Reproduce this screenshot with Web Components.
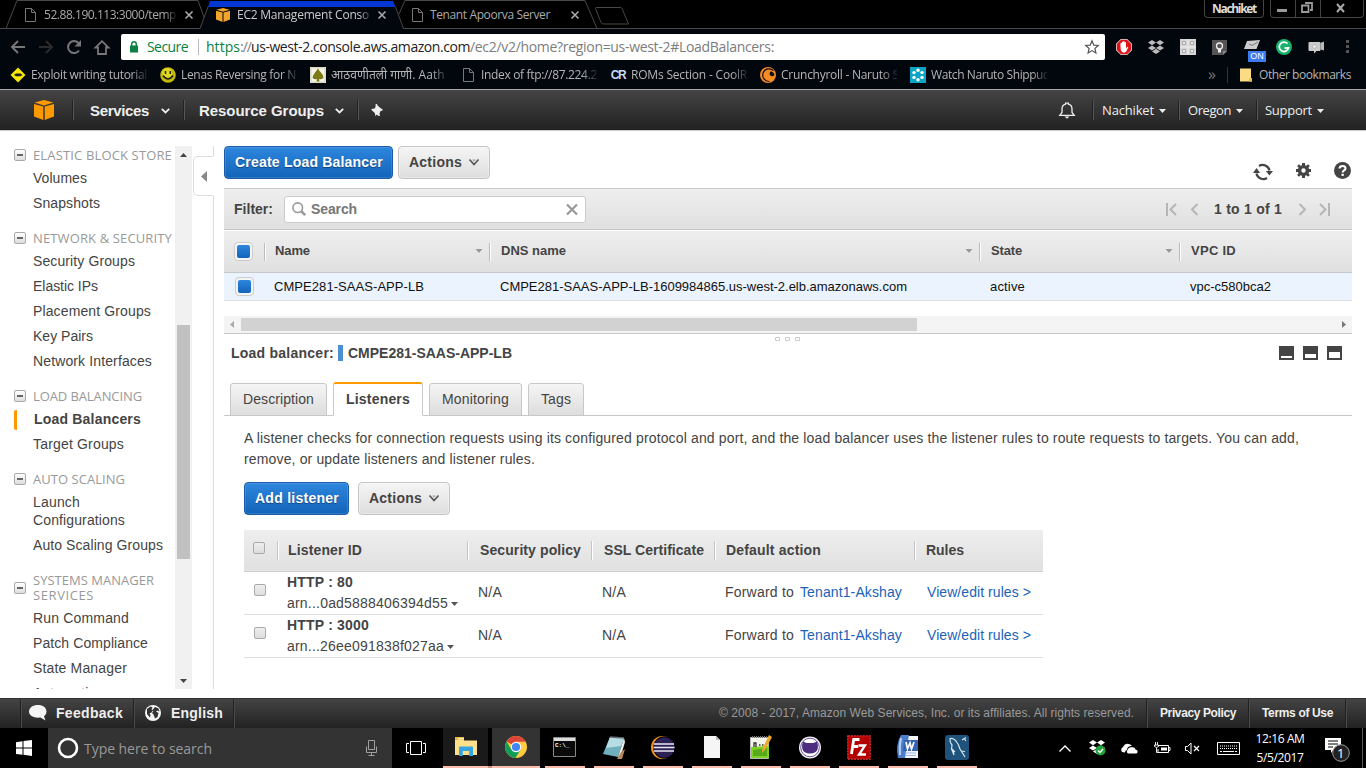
<!DOCTYPE html>
<html lang="en">
<head>
<meta charset="utf-8">
<title>EC2 Management Console</title>
<style>
html,body{margin:0;height:768px;overflow:hidden;background:#fff}
body{font-family:"Liberation Sans",Arial,sans-serif;font-size:14px;color:#444}
</style>
</head>
<body>
<app-desktop></app-desktop>
<script>
const BASE = `*{box-sizing:border-box}svg{display:block;flex:none;overflow:visible}.r{display:flex;align-items:center}.b{font-weight:bold}`;
function define(name, css, html, init) {
  customElements.define(name, class extends HTMLElement {
    constructor() {
      super();
      const t = document.createElement('template');
      t.innerHTML = `<style>${BASE}${css}</style>${html}`;
      this.attachShadow({mode: 'open'}).appendChild(t.content.cloneNode(true));
    }
    connectedCallback() { if (init) init(this); }
  });
}
const rep = (list, fn) => list.map(fn).join('');

/* Text run tracked out or in to an exact width (w attribute). */
define('fit-text', `:host{display:inline-block;white-space:nowrap;flex:none;justify-self:start}`, `<slot></slot>`, el => {
  const w = parseFloat(el.getAttribute('w'));
  if (!w) return;
  const n = [...el.textContent].length;
  el.style.letterSpacing = '0px';
  const range = document.createRange();
  range.selectNodeContents(el);
  const natural = range.getBoundingClientRect().width;
  el.style.letterSpacing = ((w - natural) / n).toFixed(4) + 'px';
});

/* ---------- icons ---------- */
const PAGE = `<path d="M1.5.5h6l4 4v9h-10z M7.5.5v4h4" fill="none" stroke="#777"/>`;
const CUBE = c => `<path d="M10 0l9.5 2.6L10 5.4.5 2.6zM0 4l9.3 2.5V20L0 16.6zM20 4l-9.3 2.5V20L20 16.6z" fill="${c}"/>`;
const DROPBOX = c => `<path d="M4 0l4 2.6L4 5.2 0 2.6zM12 0l4 2.6-4 2.6-4-2.6zM4 5.4L8 8l-4 2.6L0 8zM12 5.4L16 8l-4 2.6L8 8zM8 8.8l4 2.6L8 14l-4-2.6z" fill="${c}"/>`;
const ICONS = {
  page: [13,14,PAGE],
  cube: [20,20,CUBE('#f90')],
  cubetab: [14,14,`<g transform="scale(.7)">${CUBE('#f2a52b')}</g>`],
  x: [8,8,`<path d="M.5.5l7 7M7.5.5l-7 7" stroke="#aaa" stroke-width="1.6"/>`],
  back: [14,14,`<path d="M14 7H1.5M7 1L1 7l6 6" fill="none" stroke="#777" stroke-width="2"/>`],
  fwd: [14,14,`<path d="M0 7h12.500M7 1l6 6-6 6" fill="none" stroke="#2b2b2d" stroke-width="2"/>`],
  reload: [14,14,`<path d="M12 10.500A6 6 0 1 1 11.500 3" fill="none" stroke="#777" stroke-width="2"/><path d="M14 0v6.500H7.500z" fill="#777"/>`],
  home: [16,15,`<path d="M8 1.200L1.500 7.500H4V14h8V7.500h2.500z" fill="none" stroke="#777" stroke-width="1.800"/>`],
  lock: [8,12,`<path d="M0 4.500h8V11.500H0z" fill="#0b8043"/><path d="M1.700 5V3a2.300 2.300 0 0 1 4.600 0v2" fill="none" stroke="#0b8043" stroke-width="1.400"/>`],
  star: [14,14,`<path d="M7 .8l1.800 4.300 4.500.4-3.400 3 1 4.500L7 10.600 3.100 13l1-4.500-3.400-3 4.500-.4z" fill="none" stroke="#555" stroke-width="1.200"/>`],
  adblock: [16,16,`<path d="M4.800 0h6.400L16 4.800v6.400L11.200 16H4.800L0 11.200V4.800z" fill="#e4dcdc"/><path d="M5 .8h6l4.200 4.200v6L11 15.200H5L.8 11V5z" fill="#e2121b"/><path d="M4.500 8V4.300q.7-.8 1.300 0V7V3q.7-.8 1.400 0v3.500V2.500q.7-.8 1.400 0v4V3.500q.7-.8 1.400 0v6l1-1.500q.9-.6 1.200.2L10.300 12.500Q8.500 14.500 6 13Q4.500 11.500 4.500 8z" fill="#fff"/>`],
  dropext: [16,14,DROPBOX('#bbb')],
  grid: [16,16,`<path d="M0 0h16v16H0z" fill="#d5d5d5"/><g fill="#e8e8e8" stroke="#aaa"><path d="M2.500 2.500h3v3h-3zM10.500 2.500h3v3h-3zM2.500 10.500h3v3h-3zM10.500 10.500h3v3h-3z"/></g><path d="M0 8h16M8 0v16" stroke="#eee"/>`],
  keep: [15,15,`<path d="M0 0h15v11l-4 4H0z" fill="#555"/><path d="M15 11h-4v4z" fill="#888"/><circle cx="7.500" cy="6" r="3" fill="none" stroke="#eee" stroke-width="1.300"/><path d="M6 9h3v3.500H6z" fill="#eee"/>`],
  mailon: [22,22,`<path d="M3 1l13-1-3.500 9L0 9z" fill="#ccc"/><path d="M5 4l3 1.500L14 2" fill="none" stroke="#777"/>`],
  grammarly: [16,16,`<circle cx="8" cy="8" r="8" fill="#15b36a"/><path d="M11.500 4.700A4.700 4.700 0 1 0 12.500 9H8.500" fill="none" stroke="#fff" stroke-width="1.800"/>`],
  chat: [17,13,`<path d="M1.500 1h10q1 0 1 1v7q0 1-1 1H8.500L6 12.500V10H1.500q-1 0-1-1V2q0-1 1-1z" fill="#ccc"/><path d="M12.500 2L16 .5v9l-3.500-1z" fill="#bbb"/><path d="M5 4h3v3H5z" fill="#fff" stroke="#aaa" stroke-width=".7"/>`],
  dots: [3,14,`<path d="M0 0h3v3H0zM0 5h3v3H0zM0 10h3v3H0z" fill="#555"/>`],
  exploit: [16,16,`<path d="M8 .5L15.500 8 8 15.500.5 8z" fill="#f6e800"/><path d="M4 8L6 6.500h4.500L12.500 8l-2 1.300H6z" fill="#222"/>`],
  smile: [16,16,`<circle cx="8" cy="8" r="7.800" fill="#c3b90a"/><circle cx="7" cy="6" r="5" fill="#e0d820"/><path d="M5.500 4v3M10.300 4v3M3 8.500q5 7 10 0" fill="none" stroke="#222" stroke-width="1.500"/>`],
  leaf: [16,16,`<path d="M0 0h16v16H0z" fill="#fff"/><path d="M.8.8h14.400v14.400H.8z" fill="#f4f4ec" stroke="#b5b38a" stroke-width=".7"/><path d="M8 1.500q1 2 3 4t2.500 5q-1 2.500-4.500 1.500l.5 2.500h-3l.5-2.500Q3.500 13 2.500 10.500 3 8 5 5.500T8 1.500z" fill="#7d7a16"/>`],
  crunchy: [16,16,`<circle cx="8" cy="8" r="8" fill="#f78b24"/><path d="M13.500 3.700A6.300 6.300 0 1 0 9.500 14.400" fill="none" stroke="#111" stroke-width="1.200"/><circle cx="9.600" cy="9" r="4.900" fill="#f78b24"/><path d="M11 4.300a2.600 2.600 0 1 0 3.500 3.500 5 5 0 0 0-3.500-3.500" fill="#111"/>`],
  naruto: [16,16,`<path d="M0 0h16v16H0z" fill="#0aa5c8"/><g fill="#fff"><circle cx="8" cy="3.300" r="1.700"/><circle cx="12" cy="5.600" r="1.700"/><circle cx="12" cy="10.400" r="1.700"/><circle cx="8" cy="12.700" r="1.700"/><circle cx="4" cy="10.400" r="1.700"/><circle cx="4" cy="5.600" r="1.700"/></g>`],
  folder: [12,14,`<path d="M0 .5h11v9.500l1 .500v3H0z" fill="#fbdc83"/><path d="M9 13.500v-3h3v3z" fill="#e5bc54"/>`],
  caret: [9,6,`<path d="M.8.8l3.700 3.700L8.200.8" fill="none" stroke="#eee" stroke-width="1.800"/>`],
  caretfill: [7,4,`<path d="M0 0h7L3.500 4z" fill="#eee"/>`],
  pin: [12,13,`<path d="M4.800 0L11 5.400 9.700 6.600 8.700 6.300 6.900 8.600 7 11.200 5.900 11.300 3.900 8.700" fill="#eee"/><path d="M4.800 0h1.200L6.500 2l3 2.500L11.500 5v1.500L9.500 7 8.500 9.500 9 12H7.800L5.500 9.800 4.500 12.500 3.800 9 .5 6V5l3-.5L5 3z" fill="#eee"/>`],
  bell: [16,17,`<path d="M.8 13.300L3 10.500V7q0-4 3.600-4.800V1.200h2.800v1Q13 3 13 7v3.500l2.200 2.800z" fill="none" stroke="#eee" stroke-width="1.300"/><path d="M5.500 14.500h5L8 16.800z" fill="#eee"/>`],
  refresh: [20,16,`<path d="M16.500 6.500A7 7 0 0 0 6 2M3.500 9.500A7 7 0 0 0 14 14" fill="none" stroke="#444" stroke-width="2.300"/><path d="M12.800 7h7.200l-3.500 4.500zM0 9l3.500-5L7.200 9z" fill="#444"/>`],
  gear: [15,15,`<path d="M6 0h3v2.200l1.500.5L12 1.200 13.900 3.100 12.500 4.600 13 6h2v3h-2l-.5 1.400 1.400 1.500L12 13.800l-1.500-1.500-1.500.5V15H6v-2.200l-1.500-.5L3 13.800 1.100 11.900 2.500 10.400 2 9H0V6h2l.5-1.400L1.100 3.100 3 1.200l1.500 1.500L6 2.200zM7.500 5.300a2.200 2.200 0 1 0 0 4.400 2.200 2.200 0 0 0 0-4.400" fill="#444" fill-rule="evenodd"/>`],
  help: [17,17,`<circle cx="8.500" cy="8.500" r="8.500" fill="#444"/><path d="M5.500 6.500Q5.700 4 8.600 4T11.500 6.500Q11.500 7.800 9.800 8.600 8.700 9.200 8.700 10.500" fill="none" stroke="#fff" stroke-width="2.100"/><path d="M7.500 11.800h2.300v2.100H7.500z" fill="#fff"/>`],
  search: [14,14,`<circle cx="5.700" cy="5.700" r="4.800" fill="none" stroke="#999" stroke-width="1.600"/><path d="M9.200 9.200l4 4" stroke="#999" stroke-width="2.600"/>`],
  clear: [12,11,`<path d="M1 .5l10 10M11 .5l-10 10" stroke="#999" stroke-width="2.200"/>`],
  first: [11,13,`<path d="M1 0v13M10 1L4.500 6.500 10 12" fill="none" stroke="#b5b5b5" stroke-width="2"/>`],
  prev: [7,13,`<path d="M6.500 1L1 6.500 6.500 12" fill="none" stroke="#b5b5b5" stroke-width="2"/>`],
  next: [7,13,`<path d="M.5 1L6 6.500.5 12" fill="none" stroke="#b5b5b5" stroke-width="2"/>`],
  last: [11,13,`<path d="M10 0v13M1 1l5.500 5.500L1 12" fill="none" stroke="#b5b5b5" stroke-width="2"/>`],
  sort: [8,5,`<path d="M.5 0h7L4 4z" fill="#999"/>`],
  drop: [7,4,`<path d="M0 0h7L3.500 4z" fill="#555"/>`],
  pane1: [15,14,`<path d="M0 0h15v14H0z" fill="#444"/><path d="M2 10h11v2H2z" fill="#fff"/>`],
  pane2: [15,14,`<path d="M0 0h15v14H0z" fill="#444"/><path d="M2 8h11v4H2z" fill="#fff"/>`],
  pane3: [15,14,`<path d="M0 0h15v14H0z" fill="#444"/><path d="M2 6h11v6H2z" fill="#fff"/>`],
  grip: [26,4,`<g fill="none" stroke="#ccc"><path d="M.5 3.500v-3h4v3zM10.500 3.500v-3h4v3zM20.500 3.500v-3h4v3z"/></g>`],
  up: [7,4,`<path d="M3.500 0L7 4H0z" fill="#444"/>`],
  down: [7,4,`<path d="M0 0h7L3.500 4z" fill="#444"/>`],
  left: [6,11,`<path d="M6 0v11L0 5.500z" fill="#888"/>`],
  sleft: [4,7,`<path d="M4 0v7L0 3.500z" fill="#aaa"/>`],
  sright: [4,7,`<path d="M0 0l4 3.500L0 7z" fill="#777"/>`],
  actcaret: [10,7,`<path d="M.5.5L5 5.500 9.500.5" fill="none" stroke="#555" stroke-width="1.600"/><path d="M3 .5L5 2.800 7 .5z" fill="#aaa"/>`],
  bubble: [18,16,`<path d="M9 0c5 0 8.500 2.700 8.500 6.500 0 2-1 3.700-2.500 4.800l1.500 4.200-5-3C5.500 13.300 0 11 0 6.500 0 2.700 4 0 9 0z" fill="#f4f4f4"/>`],
  globe: [16,16,`<circle cx="8" cy="8" r="8" fill="#f4f4f4"/><path d="M2 4l3.500-2.500 2 1-1 2 1.500 1-2 2.500H4.500l1 2-.5 2.500L2 9zM10 2l3.500 1.500 1 3-2-1-1.500 1 2.500 1.500-1 4-2.500 1.500-1.500-4L7 8l1.500-2-1-1z" fill="#333"/>`],
  win: [16,16,`<path d="M0 2.200L6.500 1.300V7.500H0zM7.500 1.100L16 0v7.500H7.500zM0 8.500h6.500v6.300L0 13.900zM7.500 8.500H16V16l-8.500-1.200z" fill="#fff"/>`],
  cortana: [22,22,`<circle cx="11" cy="11" r="9" fill="none" stroke="#fff" stroke-width="2.600"/>`],
  mic: [11,16,`<path d="M2.500.5h6v9h-6zM.5 6.500v6h10v-6M5.500 12.500v3M2.500 15.500h6" fill="none" stroke="#a0a0a0"/>`],
  taskview: [20,14,`<path d="M4.500.5h11v13h-11zM3 2.500H.5v9H3M17 2.500h2.500v9H17" fill="none" stroke="#fff"/>`],
  explorer: [22,20,`<path d="M0 1.500h9V3.500h13V18H0z" fill="#ffe08a"/><path d="M0 0h9v3H0z" fill="#e9b53f"/><path d="M3 1h6v1.500H3z" fill="#fff1b0"/><path d="M4 10.500q0-1 1-1h12q1 0 1 1V19h-3.800v-5H7.800v5H4z" fill="#35a6e0"/>`],
  chrome: [22,22,`<circle cx="11" cy="11" r="11" fill="#ffcd40"/><path d="M11 11L1.500 5.500A11 11 0 0 1 20.600 5.700H11z" fill="#db4437"/><path d="M1.500 5.500A11 11 0 0 0 10.500 22L15.600 13.500 11 11 6.400 13.500z" fill="#0f9d58"/><circle cx="11" cy="11" r="5.200" fill="#fff"/><circle cx="11" cy="11" r="4.100" fill="#4285f4"/>`],
  cmd: [23,20,`<path d="M.5.5h22v19H.5z" fill="#0a0a0a" stroke="#888"/><path d="M1 1h21v3H1z" fill="#ddd"/>`],
  notepad: [23,23,`<path d="M7 1l14 1-6 19L0 18z" fill="#6fb0bf"/><path d="M7 1l14 1-3 8L3 12z" fill="#b5dde3"/><path d="M21 2l1 4-5 17-2-2z" fill="#eee"/><path d="M18 16l4-3-3 10H14z" fill="#b98a57"/><path d="M7 1l14 1" stroke="#667" stroke-width="1.500"/>`],
  eclipse: [24,23,`<circle cx="11.500" cy="11.500" r="11.500" fill="#f7941e"/><circle cx="13.500" cy="11.500" r="11.300" fill="#000"/><circle cx="13.300" cy="11.500" r="10.300" fill="#2c2255"/><path d="M3 8h20M2.500 11.500h21M3 15h20" stroke="#e9e7f3" stroke-width="1.600"/>`],
  doc: [16,22,`<path d="M0 0h12l4 4v18H0z" fill="#f5f5f5"/><path d="M12 0v4h4z" fill="#bbb"/>`],
  npp: [22,24,`<path d="M.5 2.500h18v21H.5z" fill="#f2f6ea" stroke="#bbb"/><path d="M1 12l18-1v12H1z" fill="#7ed321"/><path d="M3 15l14-2v8H3z" fill="#55ab1c"/><path d="M2 2h16" stroke="#777" stroke-dasharray="1 1" stroke-width="2"/><path d="M4 12V8h2v4M9 10h1.500M12 10h1.500" fill="none" stroke="#333" stroke-width="1.300"/><path d="M19 0l3 2-7 13-3 3 .5-4.500z" fill="#f0a92a"/>`],
  github: [22,23,`<circle cx="11" cy="11.500" r="11" fill="#f4f1f8"/><circle cx="11" cy="11.500" r="9.300" fill="#fff" stroke="#4b2f7c" stroke-width=".8"/><path d="M4 5.500l3.500 1.500h7L18 5.500q1.500 4 .8 7Q17.500 17.500 11 17.500T3.200 12.500Q2.500 9.500 4 5.500z" fill="#4c2d80"/>`],
  fz: [24,25,`<path d="M.8.8h22.400v23.400H.8z" fill="#b30000" stroke="#d33" stroke-width="1.300" stroke-dasharray="2 1"/><path d="M12.500 4.500H6.700L4.500 19M5.700 11.500h5.500" fill="none" stroke="#fff" stroke-width="2.800"/><path d="M11.500 10.500H18L12 19.500h7" fill="none" stroke="#fff" stroke-width="2.300"/>`],
  word: [24,24,`<path d="M9 1h13v22H6z" fill="#f4f7fc"/><path d="M5 0h8L9 23H2q-3-13 3-23" fill="#4d7fc9"/><path d="M5 3q-2 8-1 17" fill="none" stroke="#bcd2f2" stroke-width="2"/><path d="M8 5h14v11H7z" fill="#3564b4"/><path d="M10 7l1.500 7L14 8l1.500 6L18 7" stroke="#fff" stroke-width="1.700" fill="none"/><path d="M9 18h11M9 20.500h11" stroke="#9db6de"/>`],
  mysql: [24,25,`<rect width="24" height="25" rx="3" fill="#1f537c"/><path d="M4.500 4q3-2 6.500 2 3 4 4 8l5 8M5 4q-.5 3 2 6l-.5 4 2.500 6-1-5 2 2M16 16l4 .5M17 5l4-2.500M19 3l2 3" fill="none" stroke="#d5e5f0" stroke-width="1.200"/>`],
  chev: [12,7,`<path d="M.5 6.500L6 1l5.500 5.500" fill="none" stroke="#fff" stroke-width="1.400"/>`],
  dbtray: [17,16,`${DROPBOX('#fff')}<circle cx="11.500" cy="10.500" r="5" fill="#24a33b"/><path d="M9 10.500l2 2 3-3.500" fill="none" stroke="#fff" stroke-width="1.300"/>`],
  cloud: [17,11,`<path d="M1 9q-2-3 1-5Q4 0 7.500 1q2 .2 3.500 2-5 0-5 4-2 0-2 2.500z" fill="#fff"/><path d="M7 10.500Q5 9 6.500 7q1-3.500 4.500-2.700Q14 4 14.500 6.500 17 7 16.500 9.500L15.500 10.500z" fill="#fff"/>`],
  batt: [16,12,`<path d="M5 3.500h9.500v7H4V7M14.500 5.500H16v3h-1.500" fill="none" stroke="#fff"/><path d="M7 5.500h6v3H7z" fill="#fff"/><path d="M.5 3h4v1.500q-2 2-4 0zM1.500 0v3M3.500 0v3M2.500 6v4.500H5" fill="none" stroke="#fff" stroke-width=".9"/>`],
  mute: [15,13,`<path d="M.5 4.500h2L6 1v11L2.500 8.500h-2z" fill="none" stroke="#fff"/><path d="M9 4l5 5M14 4L9 9" stroke="#fff" stroke-width="1.200"/>`],
  kbd: [23,13,`<path d="M.5.5h22v12H.5z" fill="none" stroke="#fff"/><path d="M3 4h17M3 6.500h17" stroke="#fff" stroke-dasharray="1 1"/><path d="M3 9.500h2M6 9.500h11M18 9.500h2" stroke="#fff"/>`],
  notif: [26,26,`<path d="M0 0h16v12H8.500L6 15v-3H0z" fill="#fff"/><path d="M3 3h10M3 6h10M3 9h5" stroke="#000"/><circle cx="16" cy="15" r="8.300" fill="#222" stroke="#999"/>`]
};
define('ui-icon', `:host{display:block;flex:none}`, '', el => {
  const [w, h, d] = ICONS[el.getAttribute('n')];
  el.shadowRoot.innerHTML = `<style>:host{display:block;flex:none;width:${w}px;height:${h}px}svg{display:block;overflow:visible}</style><svg width="${w}" height="${h}" viewBox="0 0 ${w} ${h}">${d}</svg>`;
});
const ic = (n, style = '') => `<ui-icon n="${n}" style="${style}"></ui-icon>`;

/* ---------- browser ---------- */
define('tab-strip', `
:host{display:block;height:29px;background:#000;position:relative;font:12px "Open Sans","Noto Sans",sans-serif;color:#aaa}
.o{position:absolute;left:0;top:0}
.row{position:relative;display:grid;grid-template-columns:24px 20px 141px 31px 21px 141px 34px 18px 141px 633px 60px 6px 94px;height:29px;align-items:center}
.f{overflow:hidden;-webkit-mask:linear-gradient(90deg,#000 90%,transparent)}
.u{align-self:start;height:18px;border:1px solid #444;border-top:0;border-radius:0 0 4px 4px;font-weight:bold;font-size:12px;color:#ddd;padding-left:7px}
.u fit-text{line-height:17px}
.w{align-self:start;height:18px;border:1px solid #444;border-top:0;border-radius:0 0 4px 4px}
fit-text{line-height:18px;display:block}`,
`<svg class="o" width="1366" height="29">
<path d="M0 28.500H6L17 .5H198L205 20M6 28.500H200M597 28.500H1366M597 28.500L585 .5H405L399 14M403 28.500H597" fill="none" stroke="#484848"/>
<path d="M200 29L210 .5H393L403.500 29z" fill="#02060d"/><path d="M208 7L210 1H393L395.500 7z" fill="#0437d2"/>
<path d="M200 28.500L208 7M395.500 7L403.500 28.500" fill="none" stroke="#484848"/>
<path d="M595.500 8.500L601 22.500Q602 24 604 24H628.500L622 8.500Q621.500 7.500 620 7.500H596z" fill="none" stroke="#484848"/></svg>
<div class="row"><span></span>${ic('page')}<div class="f" style="width:134px"><fit-text w="132">52.88.190.113:3000/temp</fit-text></div>${ic('x')}${ic('cubetab')}
<div class="f" style="width:136px;color:#ccc"><fit-text w="132">EC2 Management Conso</fit-text></div>${ic('x')}${ic('page','margin-left:-1px')}<fit-text w="120">Tenant Apoorva Server</fit-text>${ic('x')}
<div class="u"><fit-text w="44">Nachiket</fit-text></div><span></span>
<div class="w"><svg width="92" height="17"><path d="M24.500 0v17M49.500 0v17" stroke="#444"/><path d="M6 9h10v3H6z" fill="#999"/><path d="M31 5.500h6.500v6.500H31zM34 3h7v7h-2" fill="none" stroke="#999" stroke-width="1.800"/><path d="M66 4l7 8M73 4l-7 8" stroke="#aaa" stroke-width="2"/></svg></div></div>`);

define('address-bar', `
:host{display:block;background:#02060d;height:33px;padding-top:5px;font:14px "Open Sans","Noto Sans",sans-serif}
.row{display:flex;height:26px;align-items:center}
.url{display:grid;grid-template-columns:9px 17px 51px 8px 34px 11px 219px 616px;width:984px;height:26px;background:#fff;border-radius:2px;align-items:center;color:#7d7d7d;margin-right:11px}
.g{color:#0b8043}.k{color:#222}
.url fit-text{line-height:20px}
.d{width:1px;height:16px;background:#bbb;}
.e{width:32px;display:flex;flex:none;position:relative}
.on{position:absolute;left:4px;top:11px;width:18px;height:11px;background:#3d7bf0;color:#fff;font:9px/11px "Liberation Sans",sans-serif;text-align:center}`,
`<div class="row">${ic('back','margin:0 14px 0 11px')}${ic('fwd','margin-right:14px')}${ic('reload','margin-right:13px')}${ic('home','margin-right:11px')}
<div class="url"><span></span>${ic('lock')}<fit-text class="g" w="41">Secure</fit-text><span class="d"></span><fit-text class="g" w="34">https</fit-text><fit-text w="11">://</fit-text><fit-text class="k" w="219">us-west-2.console.aws.amazon.com</fit-text><div class="r"><fit-text w="304">/ec2/v2/home?region=us-west-2#LoadBalancers:</fit-text>${ic('star','margin-left:311px')}</div></div>
<div class="e">${ic('adblock')}</div><div class="e">${ic('dropext')}</div><div class="e">${ic('grid')}</div><div class="e">${ic('keep')}</div><div class="e" style="height:14px">${ic('mailon')}<span class="on">ON</span></div><div class="e">${ic('grammarly')}</div><div class="e">${ic('chat')}</div>${ic('dots','margin-left:6px')}</div>`);

define('book-mark', `:host{display:grid;grid-template-columns:21px 129px;align-items:center;height:27px;width:150px;flex:none}
.f{width:116px;overflow:hidden;-webkit-mask:linear-gradient(90deg,#000 87%,rgba(0,0,0,.15))}.i{display:flex;width:16px;justify-content:center}`,
 `<div class="i"><slot name="icon"></slot></div><div class="f"><slot></slot></div>`);
const marks = [['exploit','Exploit writing tutorial',116],['smile','Lenas Reversing for N',115],['leaf','आठवणीतली गाणी. Aath',114],['page','Index of ftp://87.224.2',116],['cr','ROMs Section - CoolR',116],['crunchy','Crunchyroll - Naruto S',118],['naruto','Watch Naruto Shippud',119]];
define('bookmark-bar', `:host{display:flex;height:28px;background:#02060d;border-bottom:1px solid #aaa;padding:0 0 2px 10px;align-items:center;font:12px "Open Sans","Noto Sans",sans-serif;color:#b5b5b5;box-sizing:border-box}
fit-text{line-height:20px}.cr{font:bold 12px/16px "Liberation Sans",sans-serif;color:#c6dcf5;letter-spacing:-1.500px}`,
 rep(marks, m => `<book-mark>${m[0]==='cr'?'<span slot="icon" class="cr">CR</span>':`<ui-icon slot="icon" n="${m[0]}"></ui-icon>`}<fit-text w="${m[2]}">${m[1]}</fit-text></book-mark>`) +
 `<span style="width:19px;margin-left:148px;color:#777;font-size:16px;line-height:20px;margin-top:-2px">»</span><span style="width:1px;height:16px;background:#333;margin-right:12px"></span>${ic('folder','margin-right:7px')}<fit-text w="92">Other bookmarks</fit-text>`);

/* ---------- AWS header and footer ---------- */
define('aws-nav', `:host{display:grid;grid-template-columns:34px 38px 18px 76px 17px 16px 135px 23px 14px 688px 33px 10px 57px 19px 10px 47px 21px 9px 51px 20px;height:40px;background:linear-gradient(#444,#222);align-items:center;color:#eee;font-weight:bold;font-size:15px}
i{width:2px;height:20px;background:linear-gradient(90deg,#222 50%,#555 50%)}
.s{font:13px "Open Sans","Noto Sans",sans-serif}
fit-text{line-height:18px;margin-top:2px}fit-text.s{margin-top:0}.c{margin-top:1px}`,
`<span></span>${ic('cube')}<i></i><fit-text w="59">Services</fit-text>${ic('caret','margin:2px 0 0 -5px')}<i></i><fit-text w="125">Resource Groups</fit-text>${ic('caret','margin:2px 0 0 1px')}<i></i>${ic('pin')}${ic('bell')}<i></i>
<fit-text class="s" w="52">Nachiket</fit-text>${ic('caretfill','margin-top:2px')}<i></i><fit-text class="s" w="43">Oregon</fit-text>${ic('caretfill','margin:2px 0 0 1px')}<i></i><fit-text class="s" w="47">Support</fit-text>${ic('caretfill','margin:2px 0 0 1px')}`);

define('aws-footer', `:host{display:grid;grid-template-columns:20px 9px 27px 77px 12px 26px 62px 486px 427px 14px 88px 14px 83px 2px;height:30px;background:linear-gradient(#444,#222);align-items:center;color:#eee;font-weight:bold;border-top:1px solid #333;box-sizing:border-box}
i{width:2px;height:29px;background:linear-gradient(90deg,#222 50%,#4a4a4a 50%)}
fit-text,ui-icon{margin-top:-2px}
.s{font-size:12px}.c{font-weight:normal;font-size:12px;color:#999}`,
`<span></span><i></i>${ic('bubble')}<fit-text w="67">Feedback</fit-text><i></i>${ic('globe')}<fit-text w="52">English</fit-text><i></i><fit-text class="c" w="415">© 2008 - 2017, Amazon Web Services, Inc. or its affiliates. All rights reserved.</fit-text><i></i><fit-text class="s" w="76">Privacy Policy</fit-text><i></i><fit-text class="s" w="71">Terms of Use</fit-text><i></i>`);

/* ---------- sidebar ---------- */
define('side-head', `:host{display:grid;grid-template-columns:19px 150px;padding:15px 0 3px;align-items:center;font:13px/15px "Open Sans","Noto Sans",sans-serif;color:#999}
.m{width:12px;height:12px;border:1px solid #aaa;border-radius:2px;background:linear-gradient(#fff,#ddd);display:flex;align-items:center;justify-content:center}
.m::after{content:"";width:6px;height:2px;background:#666}`, `<span class="m"></span><div><slot></slot></div>`);
define('side-item', `:host{display:block;padding:3.5px 0 3.5px 19px;line-height:18px;position:relative}
:host([on]){font-weight:bold;padding-left:20px}:host([on])::before{content:"";position:absolute;left:0;top:3px;width:3px;height:20px;background:#f90;border-radius:2px 0 0 2px}`, `<slot></slot>`);
const it = (t, w, on='') => `<side-item ${on}><fit-text w="${w}">${t}</fit-text></side-item>`;
const hd = (t, w) => `<side-head><fit-text w="${w}">${t}</fit-text></side-head>`;
define('aws-sidebar', `:host{display:grid;grid-template-columns:175px 17px 22px;width:214px;padding-top:15px;height:558px}
.list{padding-left:14px;height:543px;overflow:hidden}.list>div{margin-top:-13.5px}
.bar{height:543px;background:#f1f1f1;display:flex;flex-direction:column;align-items:center;padding:7px 0 6px}
.th{width:13px;height:234px;background:#c1c1c1;margin:168px 0 auto}
.h{display:flex;flex-direction:column}
.h b{display:block;width:20px;height:40px;border:1px solid #ddd;border-right:0;border-radius:5px 0 0 5px;margin-left:1px;padding:14px 0 0 7px}
.h i{width:1px;background:#ddd;align-self:flex-end}`,
`<div class="list"><div>${hd('ELASTIC BLOCK STORE',139)}${it('Volumes',54)}${it('Snapshots',67)}
${hd('NETWORK &amp; SECURITY',139)}${it('Security Groups',102)}${it('Elastic IPs',65)}${it('Placement Groups',118)}${it('Key Pairs',60)}${it('Network Interfaces',119)}
${hd('LOAD BALANCING',109)}${it('Load Balancers',107,'on')}${it('Target Groups',91)}
${hd('AUTO SCALING',92)}<side-item><fit-text w="47">Launch</fit-text><br><fit-text w="92">Configurations</fit-text></side-item>${it('Auto Scaling Groups',130)}
<side-head><fit-text w="121">SYSTEMS MANAGER</fit-text><br><fit-text w="61">SERVICES</fit-text></side-head>${it('Run Command',96)}${it('Patch Compliance',115)}${it('State Manager',94)}${it('Automations',78)}</div></div>
<div class="bar">${ic('up')}<div class="th"></div>${ic('down')}</div>
<div class="h"><i style="height:10px"></i><b>${ic('left')}</b><i style="height:493px"></i></div>`);

/* ---------- main ---------- */
define('ui-button', `:host{display:flex;height:33px;align-items:center;border:1px solid #c4c4c4;border-radius:4px;background:linear-gradient(#f5f5f5,#ddd);box-shadow:inset 0 0 0 1px rgba(255,255,255,.35);font-weight:bold;flex:none;box-sizing:border-box;padding:0 0 1px 10px}
:host([primary]){background:linear-gradient(#2e86de,#1264b8);border-color:#1a5ca8;color:#fff;text-shadow:0 1px 1px rgba(0,0,0,.4);box-shadow:inset 0 0 0 1px rgba(255,255,255,.12)}
`, `<slot></slot>`);
define('check-blue', `:host{display:block;width:19px;height:19px;border:1px solid #ccc;border-radius:4px;background:#f4f4f4;padding:2px;box-sizing:border-box}div{width:13px;height:13px;border:0;border-radius:2px;background:linear-gradient(#2e86de,#1264b8)}`, `<div></div>`);
define('check-box', `:host{display:block;width:12px;height:12px;border:1px solid #aaa;border-radius:2px;background:linear-gradient(#eee,#ddd);box-sizing:border-box}`, ``);
define('action-bar', `:host{display:flex;height:42px}.r{margin:6px 1px 0 auto;gap:23px}`,
`<ui-button primary style="width:169px"><fit-text w="148">Create Load Balancer</fit-text></ui-button><ui-button style="width:92px;margin-left:5px"><fit-text w="53">Actions</fit-text>${ic('actcaret','margin-left:7px')}</ui-button>
<div class="r">${ic('refresh','margin-top:4px')}${ic('gear')}${ic('help')}</div>`);
define('filter-bar', `:host{display:flex;height:42px;border-top:1px solid #c8c8c8;border-bottom:1px solid #c8c8c8;background:linear-gradient(#eee,#e0e0e0);align-items:center;padding-left:10px;font-weight:bold;box-sizing:border-box}
.s{width:302px;height:27px;border:1px solid #ccc;border-radius:3px;background:#fff;display:flex;align-items:center;margin-left:11px;padding:0 7px 0 7px;color:#777}`,
`<fit-text w="39">Filter:</fit-text><div class="s">${ic('search')}<fit-text w="46" style="margin-left:5px">Search</fit-text>${ic('clear','margin-left:auto')}</div>
<div class="r" style="margin-left:580px">${ic('first')}${ic('prev','margin-left:14px')}<fit-text w="68" style="margin:0 17px 0 16px">1 to 1 of 1</fit-text>${ic('next')}${ic('last','margin-left:13px')}</div>`);
define('lb-table', `:host{display:block}
.h,.w{display:grid;grid-template-columns:40px 10px 201px 14px 11px 465px 14px 11px 175px 14px 11px 162px;align-items:center}
.h{height:42px;margin-top:1px;background:linear-gradient(#eee,#e0e0e0);border-bottom:1px solid #c8c8c8;font-weight:bold;font-size:13px}
.h i{width:2px;height:18px;background:linear-gradient(90deg,#bbb 50%,#fff 50%)}
.h fit-text{margin:-2px 0 0 1px}
.w{height:28px;background:#eaf3fe;border-bottom:1px solid #ddd;color:#111;font-size:13px}
.sb{height:18px;margin-top:15px;background:#f4f4f4;border-bottom:1px solid #c8c8c8;display:flex;align-items:center;padding:0 6px}
.sb div{width:676px;height:13px;background:#d2d2d2;margin:0 auto 0 7px}`,
`<div class="h"><check-blue style="margin-left:10px"></check-blue><i></i><fit-text w="35">Name</fit-text>${ic('sort')}<i></i><fit-text w="65">DNS name</fit-text>${ic('sort')}<i></i><fit-text w="31">State</fit-text>${ic('sort')}<i></i><fit-text w="45">VPC ID</fit-text></div>
<div class="w"><check-blue style="margin-left:11px"></check-blue><i></i><fit-text w="150">CMPE281-SAAS-APP-LB</fit-text><i></i><i></i><fit-text w="407">CMPE281-SAAS-APP-LB-1609984865.us-west-2.elb.amazonaws.com</fit-text><i></i><i></i><fit-text w="35">active</fit-text><i></i><i></i><fit-text w="81">vpc-c580bca2</fit-text></div>
<div class="sb">${ic('sleft')}<div></div>${ic('sright')}</div>`);
define('detail-head', `:host{display:block}.g{display:flex;justify-content:center;padding-top:3px;height:7px}.r{height:24px;padding:0 10px 0 7px;font-weight:bold}.b2{width:5px;height:16px;background:#4a90d0;margin:0 5px 0 4px}`,
`<div class="g">${ic('grip')}</div><div class="r"><fit-text w="103">Load balancer:</fit-text><span class="b2"></span><fit-text w="164">CMPE281-SAAS-APP-LB</fit-text>${ic('pane1','margin:0 9px 0 auto')}${ic('pane2','margin-right:9px')}${ic('pane3')}</div>`);
define('tab-item', `:host{display:flex;justify-content:center;align-items:center;height:33px;box-sizing:border-box;border:1px solid #c8c8c8;border-radius:3px 3px 0 0;background:linear-gradient(#f5f5f5,#ddd);flex:none;padding-bottom:2px}
:host([on]){background:#fff;height:34px;border-top:2px solid #f90;border-bottom-color:#fff;font-weight:bold}`, `<slot></slot>`);
define('tab-row', `:host{display:flex;height:51px;align-items:flex-end;gap:6px;padding-left:6px;box-shadow:inset 0 -1px #c8c8c8}`,
`<tab-item style="width:97px"><fit-text w="71">Description</fit-text></tab-item><tab-item on style="width:90px"><fit-text w="64">Listeners</fit-text></tab-item><tab-item style="width:93px"><fit-text w="67">Monitoring</fit-text></tab-item><tab-item style="width:56px"><fit-text w="30">Tags</fit-text></tab-item>`);
const row = (t, tw, a, aw) => `<div class="w"><check-box></check-box><div><fit-text class="b" w="${tw}">${t}</fit-text><div class="r"><fit-text w="${aw}">${a}</fit-text>${ic('drop','margin-left:3px')}</div></div><fit-text class="o" w="24">N/A</fit-text><fit-text class="o" w="24">N/A</fit-text><span class="o"><fit-text w="69">Forward to</fit-text><fit-text class="l" w="102" style="margin-left:6px">Tenant1-Akshay</fit-text></span><fit-text class="l o" w="104">View/edit rules &gt;</fit-text></div>`;
define('listener-table', `:host{display:block;width:799px;margin-top:15px}
.h,.w{display:grid;align-items:center}
.h{grid-template-columns:33px 11px 179px 13px 111px 13px 110px 12px 188px 12px 117px;height:42px;background:linear-gradient(#eee,#e0e0e0);border-bottom:1px solid #ccc;font-weight:bold;box-shadow:inset 0 -1px #e8e8e8}
.h i{width:2px;height:19px;background:linear-gradient(90deg,#c4c4c4 50%,#fff 50%)}
.h fit-text{margin-top:-2px}
.w{grid-template-columns:33px 191px 124px 123px 202px 104px;padding-left:10px;height:43px;border-bottom:1px solid #ddd;line-height:21px}
.w check-box{margin-top:-6px}.l{color:#1a62b9}.o{margin-top:-2px}`,
`<div class="h"><check-box style="margin:-6px 0 0 9px"></check-box><i></i><fit-text w="74">Listener ID</fit-text><i></i><fit-text w="101">Security policy</fit-text><i></i><fit-text w="100">SSL Certificate</fit-text><i></i><fit-text w="95">Default action</fit-text><i></i><fit-text w="38">Rules</fit-text></div>
${row('HTTP : 80',66,'arn...0ad5888406394d55',161)}${row('HTTP : 3000',82,'arn...26ee091838f027aa',157)}`);
define('aws-main', `:host{display:block;width:1128px;margin-left:10px;padding-top:15px}.p{padding:12px 20px 0}.p p{margin:0 0 12px;line-height:21px}`,
`<action-bar></action-bar><filter-bar></filter-bar><lb-table></lb-table><detail-head></detail-head><tab-row></tab-row>
<div class="p"><p><fit-text w="1055">A listener checks for connection requests using its configured protocol and port, and the load balancer uses the listener rules to route requests to targets. You can add,</fit-text><br><fit-text w="291">remove, or update listeners and listener rules.</fit-text></p>
<div class="r"><ui-button primary style="width:105px"><fit-text w="84">Add listener</fit-text></ui-button><ui-button style="width:92px;margin-left:9px"><fit-text w="53">Actions</fit-text>${ic('actcaret','margin-left:7px')}</ui-button></div>
<listener-table></listener-table></div>`);

/* ---------- taskbar ---------- */
define('task-app', `:host{display:flex;width:40px;height:40px;margin-right:9px;flex:none;align-items:center;justify-content:center;border-bottom:2px solid #ffbcab;box-sizing:border-box;position:relative}`, `<slot></slot>`);
define('win-taskbar', `:host{display:flex;height:40px;background:#000;align-items:center;font-family:"Open Sans","Noto Sans",sans-serif;color:#fff}
.st{width:48px;display:flex;justify-content:center}
.se{width:344px;height:40px;background:#333;display:flex;align-items:center;padding:0 15px 0 9px;color:#999;font-size:14px}
.tv{width:51px;display:flex;justify-content:center;padding-right:3px}
.x{position:absolute;right:-4px;bottom:-2px;width:4px;height:2px;background:#c59488}
.cl{width:50px;font-size:12px;line-height:19px;text-align:center}
.n{position:relative}.n span{position:absolute;left:12px;top:6px;font-size:13px;line-height:18px}
.c{position:absolute;left:10px;top:14px;font:bold 6px/8px "Liberation Mono",monospace;color:#fff}`,
`<div class="st">${ic('win')}</div><div class="se">${ic('cortana')}<fit-text w="128" style="margin-left:5px">Type here to search</fit-text>${ic('mic','margin-left:auto')}</div><div class="tv">${ic('taskview')}</div>
<task-app style="width:45px;background:#1a1a1a;margin-right:4px">${ic('explorer')}<span class="x"></span></task-app><task-app style="width:48px;background:#333;margin-right:5px">${ic('chrome')}</task-app><task-app>${ic('cmd','margin-right:2px')}<span class="c">C:\\_</span></task-app>`
+ rep(['notepad','eclipse','doc','npp','github','fz','word','mysql'], n => `<task-app>${ic(n)}</task-app>`)
+ `${ic('chev','margin-left:73px')}${ic('dbtray','margin-left:18px')}${ic('cloud','margin-left:15px')}${ic('batt','margin-left:16px')}${ic('mute','margin-left:15px')}${ic('kbd','margin-left:17px')}
<div class="cl" style="margin-left:15px"><fit-text w="49">12:16 AM</fit-text><fit-text w="47">5/5/2017</fit-text></div><div class="n" style="margin:6px 0 0 20px">${ic('notif')}<span>1</span></div><span style="width:1px;height:40px;background:#555;margin-left:11px"></span>`);

define('app-desktop', `:host{display:block;width:1366px;height:768px;overflow:hidden}.body{display:flex;height:568px;border-top:1px solid #ccc}`,
`<tab-strip></tab-strip><address-bar></address-bar><bookmark-bar></bookmark-bar><aws-nav></aws-nav><div class="body"><aws-sidebar></aws-sidebar><aws-main></aws-main></div><aws-footer></aws-footer><win-taskbar></win-taskbar>`);
</script>
</body>
</html>
